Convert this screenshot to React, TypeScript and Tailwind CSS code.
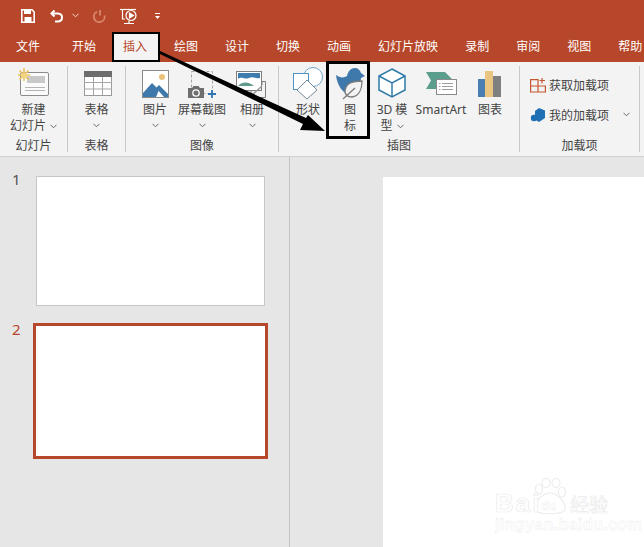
import type { ReactNode } from "react"

const Chevron = ({ className = "", color = "#666" }: { className?: string; color?: string }) => (
    <svg className={className} width="7" height="5" viewBox="0 0 7 5" fill="none" stroke={color} strokeWidth="1">
        <path d="M0.5 0.8 L3.5 3.8 L6.5 0.8" />
    </svg>
)

const Slot = ({ children }: { children: ReactNode }) => (
    <svg width="32" height="32" viewBox="0 0 32 32" fill="none" className="overflow-visible shrink-0">
        {children}
    </svg>
)

const NewSlideIcon = () => (
    <Slot>
        <rect x="2.5" y="4.5" width="28" height="23" rx="1.5" fill="#fbfbfb" stroke="#8c8c8c" />
        <rect x="9" y="8" width="18" height="7" fill="#c9c9c9" />
        <path d="M7 19.5H27M7 22.5H27" stroke="#b4b4b4" />
        <path d="M6 0V13M0 7H12M1.5 2.5L10.5 11.5M10.5 2.5L1.5 11.5" stroke="#eec15f" strokeWidth="1.6" />
        <circle cx="6" cy="7" r="2.6" fill="#f4d37f" />
    </Slot>
)

const TableIcon = () => (
    <Slot>
        <rect x="3.5" y="3.5" width="27" height="24" fill="#fff" stroke="#9a9a9a" />
        <rect x="3" y="3" width="28" height="6" fill="#6d6d6d" />
        <path d="M3 14.5H31M3 21H31M12.5 9V27M21.5 9V27" stroke="#a6a6a6" />
    </Slot>
)

const PictureIcon = () => (
    <Slot>
        <rect x="3.5" y="2.5" width="26" height="27" fill="#fff" stroke="#8a8a8a" />
        <circle cx="23" cy="9" r="3" fill="#e8c27a" />
        <path d="M4 29V25L13 15L20 22L17 29Z" fill="#3f78ab" />
        <path d="M17 20L20 17L29 26V29H25Z" fill="#3f78ab" />
    </Slot>
)

const ScreenshotIcon = () => (
    <Slot>
        <rect x="5.5" y="3.5" width="21" height="22" stroke="#a4a4a4" strokeDasharray="3 2" />
        <path d="M2 20H6L7.5 18H12.5L14 20H18V30H2Z" fill="#6e6e6e" />
        <circle cx="10" cy="25" r="3.2" fill="#6e6e6e" stroke="#fff" strokeWidth="1.3" />
        <path d="M26 22V30M22 26H30" stroke="#2f75b5" strokeWidth="1.8" />
    </Slot>
)

const AlbumIcon = () => (
    <Slot>
        <path d="M15 29.5V17H26V13.5H29.5V29.5Z" fill="#f3f3f3" stroke="#7d7d7d" />
        <rect x="0.5" y="3.5" width="25" height="19" fill="#fff" stroke="#7d7d7d" />
        <rect x="2" y="5" width="22" height="6" fill="#3f7cae" />
        <path d="M2 11C6 8 9 12 13 10C17 8 20 11 24 10V14H2Z" fill="#fff" />
        <path d="M2 18C7 13 13 14 18 18H2Z" fill="#5d9a8b" />
        <path d="M16 27L26 18" stroke="#9a9a9a" strokeWidth="1.5" />
    </Slot>
)

const ShapesIcon = () => (
    <Slot>
        <g transform="translate(7 0)">
            <circle cx="14" cy="9" r="9.5" fill="#fff" stroke="#6fa4c8" />
            <rect x="-5.5" y="5.5" width="15" height="16" fill="#fff" stroke="#4f93c2" />
            <path d="M8 12L18 22L8 31L-2 22Z" fill="#fff" stroke="#75889a" />
        </g>
    </Slot>
)

const IconsIcon = () => (
    <Slot>
        <path d="M2 7C6 10 10 10 13 8C14 3 17 0 21 0C24 0 26 2 27 5L31 8L27 10C27 15 23 19 19 22L16 27C9 26 3 17 2 7Z" fill="#3f78ab" />
        <path d="M28 13C20 13 12 14 11 23C11 27 14 29 18 29C25 28 28 21 28 13Z" fill="#f3f3f3" stroke="#7a7a7a" strokeWidth="1.3" />
        <path d="M9 31L21 20" stroke="#7a7a7a" strokeWidth="1.3" />
    </Slot>
)

const CubeIcon = () => (
    <Slot>
        <path d="M16 1L29 8V22L16 29L3 22V8Z" fill="#fff" stroke="#2f7ba8" strokeWidth="1.5" />
        <path d="M3 8L16 15L29 8M16 15V29" stroke="#2f7ba8" strokeWidth="1.5" />
    </Slot>
)

const SmartArtIcon = () => (
    <Slot>
        <path d="M1 4H20L27 11H11V21H1L6 12.5Z" fill="#5c9e8e" />
        <rect x="11.5" y="11.5" width="20" height="15" fill="#fff" stroke="#8a8a8a" />
        <path d="M17 15.5H28M17 18.5H28M17 21.5H28" stroke="#9c9c9c" />
        <path d="M14 15.5H15.5M14 18.5H15.5M14 21.5H15.5" stroke="#9c9c9c" />
    </Slot>
)

const ChartIcon = () => (
    <Slot>
        <rect x="4" y="11" width="7" height="18" fill="#4a7eb0" />
        <rect x="11" y="3" width="8" height="26" fill="#eac582" />
        <rect x="19" y="8" width="8" height="21" fill="#7f7f7f" />
    </Slot>
)

const BigButton = ({ w, icon, lines, chevron }: { w: string; icon: ReactNode; lines: string[]; chevron?: "inline" | "below" }) => (
    <div className={`${w} shrink-0 flex flex-col items-center pt-[2px]`}>
        <div className="h-[32px] flex items-start justify-center">{icon}</div>
        {lines.map((line, i) => (
            <div key={line} className="h-[16px] leading-[20px] whitespace-nowrap flex items-center">
                <span className="translate-y-[2px]">{line}</span>
                {chevron === "inline" && i === lines.length - 1 && <Chevron className="ml-[4px] translate-y-[2px]" />}
            </div>
        ))}
        {chevron === "below" && (
            <div className="h-[16px] flex items-center translate-y-[1px]">
                <Chevron />
            </div>
        )}
    </div>
)

const Group = ({ w, label, pad, children }: { w: string; label: string; pad?: string; children: ReactNode }) => (
    <div className={`${w} shrink-0 flex flex-col border-r border-[#c8c8c8]`}>
        <div className={`h-[71px] flex ${pad ?? "justify-center"}`}>{children}</div>
        <div className="h-[16px] leading-[20px] text-center">{label}</div>
    </div>
)

const tabs = ["文件", "开始", "插入", "绘图", "设计", "切换", "动画", "幻灯片放映", "录制", "审阅", "视图", "帮助"]

const Titlebar = () => (
    <div className="h-[62px] bg-[#b7472a] text-white">
        <div className="h-[31px] flex items-center pl-[21px]">
            <svg width="14" height="14" viewBox="0 0 14 14" fill="none">
                <path d="M0.8 0.8H11L13.2 3V13.2H0.8Z" stroke="#fff" strokeWidth="1.6" />
                <rect x="3" y="1" width="7" height="4" fill="#fff" />
                <rect x="3.5" y="8" width="7" height="5" fill="#fff" />
            </svg>
            <svg className="ml-[15px]" width="14" height="14" viewBox="0 0 14 14" fill="none" stroke="#fff" strokeWidth="2">
                <path d="M4.5 1.5L1.5 4.5L4.5 7.5" />
                <path d="M2 4.5H8C13.5 4.5 13.5 12.5 7.5 12.5H5" />
            </svg>
            <Chevron className="ml-[8px]" color="#f3d9d0" />
            <svg className="ml-[13px]" width="14" height="14" viewBox="0 0 14 14" fill="none" stroke="#d9866d" strokeWidth="1.8">
                <path d="M5 2.8A5.4 5.4 0 1 0 12.5 6.5" />
                <path d="M8 1V6.5" />
            </svg>
            <svg className="ml-[14px]" width="18" height="18" viewBox="0 0 18 18" fill="none" stroke="#fff" strokeWidth="1.2">
                <path d="M0 2.5H16" />
                <path d="M2.5 2.5V12H5" />
                <circle cx="11" cy="8.5" r="5" />
                <path d="M9.5 6V11L13.5 8.5Z" fill="#fff" />
                <path d="M4 16.5H14M9 14V16.5" />
            </svg>
            <svg className="ml-[17px]" width="5" height="6" viewBox="0 0 5 6" fill="#fff">
                <rect width="5" height="1" />
                <path d="M0 3H5L2.5 6Z" />
            </svg>
        </div>
        <div className="h-[31px] flex items-center pl-[16px] gap-[27px]">
            {tabs.map((tab) =>
                tab === "插入" ? (
                    <div key={tab} className="relative h-full flex items-center text-[#b7472a]">
                        <div className="absolute left-[-11px] right-[-13px] top-px bottom-0 bg-[#f3f3f3] border-2 border-black" />
                        <span className="relative">{tab}</span>
                    </div>
                ) : (
                    <span key={tab} className={tab === "开始" ? "ml-[5px] whitespace-nowrap" : "whitespace-nowrap"}>
                        {tab}
                    </span>
                ),
            )}
        </div>
    </div>
)

const Ribbon = () => (
    <div className="h-[95px] bg-[#f3f3f3] border-b border-[#d2d2d2] py-[4px] flex text-[#444]">
        <Group w="w-[68px]" label="幻灯片">
            <BigButton w="w-[67px]" icon={<NewSlideIcon />} lines={["新建", "幻灯片"]} chevron="inline" />
        </Group>
        <Group w="w-[58px]" label="表格">
            <BigButton w="w-[57px]" icon={<TableIcon />} lines={["表格"]} chevron="below" />
        </Group>
        <Group w="w-[153px]" label="图像" pad="pl-[7px]">
            <BigButton w="w-[44px]" icon={<PictureIcon />} lines={["图片"]} chevron="below" />
            <BigButton w="w-[50px]" icon={<ScreenshotIcon />} lines={["屏幕截图"]} chevron="below" />
            <BigButton w="w-[50px]" icon={<AlbumIcon />} lines={["相册"]} chevron="below" />
        </Group>
        <Group w="w-[241px]" label="插图" pad="pl-[12px]">
            <BigButton w="w-[34px]" icon={<ShapesIcon />} lines={["形状"]} />
            <div className="w-[7px] shrink-0" />
            <BigButton w="w-[36px]" icon={<IconsIcon />} lines={["图", "标"]} />
            <BigButton w="w-[48px]" icon={<CubeIcon />} lines={["3D 模", "型"]} chevron="inline" />
            <BigButton w="w-[50px]" icon={<SmartArtIcon />} lines={["SmartArt"]} />
            <BigButton w="w-[48px]" icon={<ChartIcon />} lines={["图表"]} />
        </Group>
        <Group w="w-[120px]" label="加载项" pad="flex-col pl-[10px] pt-[8px] gap-[9px]">
            <div className="h-[21px] flex items-center gap-[3px]">
                <svg width="16" height="16" viewBox="0 0 16 16" fill="none" stroke="#c5562e" strokeWidth="1.2">
                    <path d="M0.6 2.6H8V15H0.6ZM0.6 9H15.4V15H8" />
                    <path d="M12 1V6.5M9.5 3.5H15" />
                </svg>
                <span className="translate-y-[1px]">获取加载项</span>
            </div>
            <div className="h-[21px] flex items-center gap-[3px]">
                <svg width="16" height="16" viewBox="0 0 16 16" fill="#1f6fb5">
                    <path d="M9 1L15 3.5V11L9 15L5 12.5V4Z" />
                    <circle cx="4" cy="11" r="3.2" />
                </svg>
                <span className="translate-y-[1px]">我的加载项</span>
                <Chevron className="ml-[11px]" />
            </div>
        </Group>
    </div>
)

const SlidePane = () => (
    <div className="w-[290px] shrink-0 border-r border-[#c4c4c4] pt-[19px] flex flex-col gap-[17px]">
        <div className="flex pl-[12px]">
            <span className="w-[24px] h-[18px] -translate-y-[6px] text-[15px] leading-[18px] text-[#555]">1</span>
            <div className="w-[229px] h-[130px] bg-white border border-[#c6c6c6]" />
        </div>
        <div className="flex pl-[12px]">
            <span className="w-[21px] h-[18px] -translate-y-[3px] text-[15px] leading-[18px] text-[#b7472a]">2</span>
            <div className="w-[235px] h-[136px] bg-white border-[3px] border-[#b7472a]" />
        </div>
    </div>
)

const Watermark = () => (
    <div className="absolute left-[495px] top-[478px] w-[120px] text-white [-webkit-text-stroke:0.7px_#ececec] font-['Liberation_Sans',sans-serif]">
        <svg className="absolute left-[37px] top-0" width="36" height="38" viewBox="0 0 36 38" fill="#fff" stroke="#ececec" strokeWidth="1.2">
            <ellipse cx="7" cy="11" rx="3.5" ry="5" />
            <ellipse cx="14" cy="5" rx="4" ry="4.5" />
            <ellipse cx="24" cy="5" rx="4" ry="4.5" />
            <ellipse cx="30" cy="14" rx="3.5" ry="5" />
            <path d="M18 15C10 15 1 26 3 32C6 37 30 37 33 32C35 26 26 15 18 15Z" />
        </svg>
        <span className="absolute left-0 top-[11px] text-[26px] leading-[28px] font-bold tracking-[2px]">Bai</span>
        <span className="absolute left-[46px] top-[21px] text-[12px] leading-[14px] font-bold [-webkit-text-stroke:0.4px_#ececec]">du</span>
        <span className="absolute left-[75px] top-[14px] text-[19px] leading-[24px] whitespace-nowrap font-['Noto_Sans_CJK_SC',sans-serif]">经验</span>
        <span className="absolute left-0 top-[38px] text-[16px] leading-[18px] tracking-[0.4px] whitespace-nowrap font-bold [-webkit-text-stroke:0.4px_#ececec]">jingyan.baidu.com</span>
    </div>
)

export default function App() {
    return (
        <div className="relative w-[644px] h-[547px] overflow-hidden flex flex-col bg-[#e6e6e6] text-[12px] leading-[16px] font-['Noto_Sans','Noto_Sans_CJK_SC',sans-serif]">
            <Titlebar />
            <Ribbon />
            <div className="flex-1 flex min-h-0">
                <SlidePane />
                <div className="flex-1 pl-[93px] pt-[20px]">
                    <div className="h-full bg-white" />
                </div>
            </div>
            <Watermark />
            <div className="absolute left-[326px] top-[61px] w-[44px] h-[78px] border-[3px] border-black" />
            <svg className="absolute left-0 top-0 pointer-events-none" width="644" height="547" viewBox="0 0 644 547">
                <path d="M160 51L306 118L308 115L325 131L300 130L303 124L160 54Z" fill="#000" />
            </svg>
        </div>
    )
}
